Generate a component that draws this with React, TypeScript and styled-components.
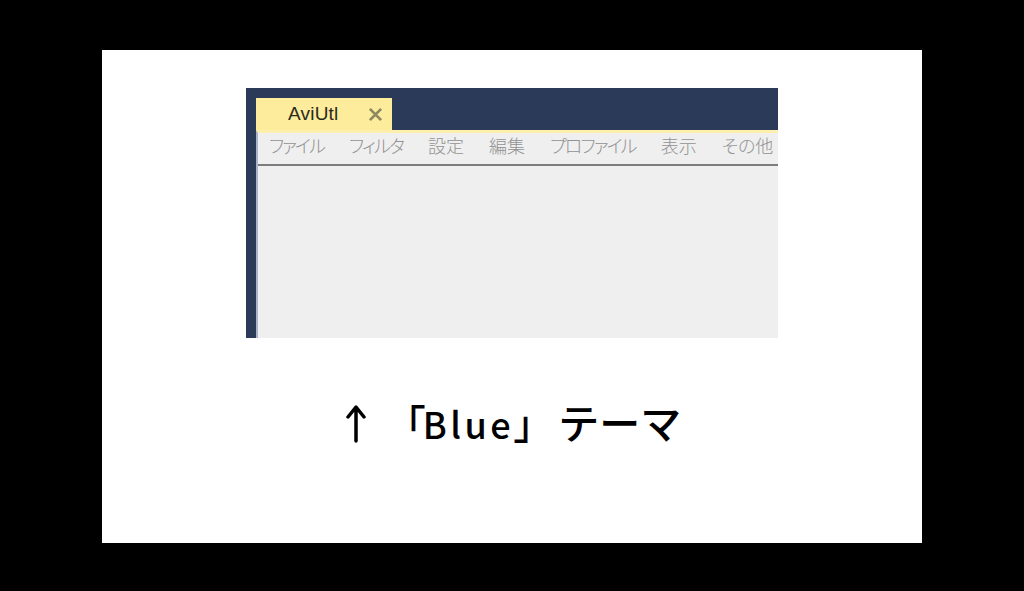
import React from 'react'
import styled, { createGlobalStyle } from 'styled-components'

const menuItems = [
  { label: 'ファイル', kana: true },
  { label: 'フィルタ', kana: true },
  { label: '設定', kana: false },
  { label: '編集', kana: false },
  { label: 'プロファイル', kana: true },
  { label: '表示', kana: false },
  { label: 'その他', kana: false },
]

export default function App() {
  return (
    <Stage>
      <GlobalStyle />
      <Slide>
        <AppWindow>
          <TitleBar>
            <Tab>
              <TabTitle>AviUtl</TabTitle>
              <CloseIcon viewBox="0 0 16 16">
                <path d="M2 2 L14 14 M14 2 L2 14" />
              </CloseIcon>
            </Tab>
          </TitleBar>
          <Content>
            <MenuBar>
              {menuItems.map((item) => (
                <MenuItem key={item.label} $kana={item.kana}>
                  {item.label}
                </MenuItem>
              ))}
            </MenuBar>
          </Content>
        </AppWindow>
        <Caption>
          <Arrow viewBox="0 0 20 40">
            <path d="M10 37 L10 4 M2 13 L10 3 L18 13" />
          </Arrow>
          <CaptionText>
            「<BlueWord>Blue</BlueWord>」<ThemeWord>テーマ</ThemeWord>
          </CaptionText>
        </Caption>
      </Slide>
    </Stage>
  )
}

const GlobalStyle = createGlobalStyle`
  html, body {
    margin: 0;
    padding: 0;
    background: #000;
  }
`

const Stage = styled.div`
  width: 1024px;
  height: 591px;
  background: #000;
  padding: 50px 102px 48px;
  box-sizing: border-box;
`

const Slide = styled.div`
  height: 100%;
  background: #fff;
  padding-top: 38px;
  box-sizing: border-box;
  display: flex;
  flex-direction: column;
  align-items: center;
`

const AppWindow = styled.div`
  width: 532px;
  height: 250px;
  background: #2a3a58;
  display: flex;
  flex-direction: column;
`

const TitleBar = styled.div`
  height: 42px;
  padding: 10px 0 0 10px;
  box-sizing: border-box;
  display: flex;
  flex-shrink: 0;
`

const Tab = styled.div`
  width: 136px;
  height: 32px;
  background: #fdec9b;
  display: flex;
  align-items: center;
  padding-left: 32px;
  box-sizing: border-box;
`

const TabTitle = styled.span`
  font-family: 'Liberation Sans', sans-serif;
  font-size: 19px;
  letter-spacing: 0.2px;
  color: #2b2a20;
  width: 80px;
`

const CloseIcon = styled.svg`
  width: 15px;
  height: 15px;
  fill: none;
  stroke: #8e8a60;
  stroke-width: 3;
`

const Content = styled.div`
  flex: 1;
  margin-left: 10px;
  background: #efefef;
  border-top: 3px solid #fdf0ae;
  border-left: 2px solid #a9b4cb;
  min-height: 0;
`

const MenuBar = styled.div`
  height: 23px;
  display: flex;
  align-items: center;
  gap: 25px;
  padding: 0 0 8px 11px;
  overflow: hidden;
  border-bottom: 2px solid #7d7d7d;
`

const MenuItem = styled.span<{ $kana: boolean }>`
  flex-shrink: 0;
  font-family: 'Noto Sans CJK JP', sans-serif;
  font-weight: 300;
  font-size: 18px;
  font-feature-settings: 'palt';
  letter-spacing: ${(props) => (props.$kana ? '-1.8px' : '0')};
  color: #929292;
  white-space: nowrap;
`

const Caption = styled.div`
  margin-top: 60px;
  margin-left: 3px;
  display: flex;
  align-items: flex-start;
  gap: 20px;
  color: #000;
`

const Arrow = styled.svg`
  width: 20px;
  height: 40px;
  margin-top: 6px;
  fill: none;
  stroke: #000;
  stroke-width: 3.5;
  stroke-linecap: round;
  stroke-linejoin: round;
`

const CaptionText = styled.span`
  margin-top: -3px;
  font-family: 'Noto Sans CJK JP', sans-serif;
  font-size: 40px;
  font-weight: 500;
  line-height: 52px;
  white-space: nowrap;
`

const BlueWord = styled.span`
  font-size: 36px;
  letter-spacing: 3.5px;
  margin: 0 -1px 0 -3px;
`

const ThemeWord = styled.span`
  font-size: 41px;
  margin-left: 5px;
`
